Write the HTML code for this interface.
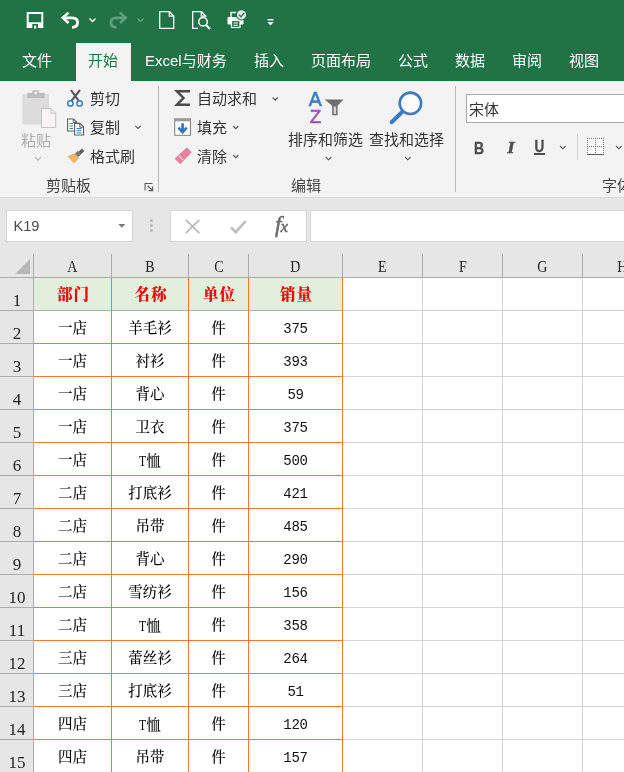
<!DOCTYPE html>
<html lang="zh-CN">
<head>
<meta charset="utf-8">
<title>Excel</title>
<style>
html,body{margin:0;padding:0;}
body{width:624px;height:772px;overflow:hidden;position:relative;background:#fff;will-change:transform;
  font-family:"Liberation Sans","Noto Sans CJK SC",sans-serif;color:#262626;}
.abs{position:absolute;}
#top{left:0;top:0;width:624px;height:81px;background:#217346;}
.tab{position:absolute;top:43px;height:37px;line-height:35px;font-size:15px;color:#fff;white-space:nowrap;}
#tab-active{left:76px;top:43px;width:55px;height:38px;background:#f3f3f3;}
#ribbon{left:0;top:81px;width:624px;height:116px;background:#f3f3f3;}
#fbar{left:0;top:197px;width:624px;height:57px;background:#e6e6e6;border-top:1px solid #dadada;box-sizing:border-box;}
.rt{position:absolute;font-size:15px;line-height:20px;white-space:nowrap;color:#333;}
.gl{position:absolute;font-size:15px;line-height:20px;white-space:nowrap;color:#444;}
.vsep{position:absolute;width:1px;background:#b9b9b9;}
.box{position:absolute;background:#fff;border:1px solid #d4d4d4;box-sizing:border-box;}
/* grid */
#grid{left:0;top:254px;width:624px;height:518px;background:#fff;}
.ch{position:absolute;top:254px;height:24px;background:#e6e6e6;border-right:1px solid #ababab;border-bottom:1px solid #ababab;box-sizing:border-box;
  font-family:"Liberation Serif","Noto Serif CJK SC",serif;font-size:17px;line-height:28px;text-align:center;color:#222;}
.ch span{display:inline-block;transform:scaleX(.8);font-size:17.5px;position:relative;top:-2.5px;}
.rh span{display:inline-block;font-size:17px;padding-left:1px;}
.rh{position:absolute;left:0;width:34px;height:33px;background:#e6e6e6;border-right:1px solid #ababab;border-bottom:1px solid #ababab;box-sizing:border-box;
  font-family:"Liberation Serif","Noto Serif CJK SC",serif;font-size:17px;line-height:45px;text-align:center;color:#222;}
.c{position:absolute;height:33px;line-height:36px;text-align:center;font-size:14.5px;color:#000;font-weight:500;
  font-family:"Liberation Mono","Noto Serif CJK SC",serif;white-space:nowrap;}
.c i{font-style:normal;font-weight:400;display:inline-block;font-family:"Liberation Serif",serif;transform:scaleX(.8);margin:0 -1px;}
.hd{color:#f00000;font-weight:900;font-family:"Liberation Serif","Noto Serif CJK SC",serif;font-size:15.5px;letter-spacing:1px;text-indent:2px;line-height:34px;}
.num{color:#111;font-size:14px;font-weight:400;letter-spacing:-0.3px;}
.gv{position:absolute;width:1px;background:#d4d4d4;}
.gh{position:absolute;height:1px;background:#d4d4d4;}
.ov{position:absolute;width:1px;background:#ed7d31;}
.oh{position:absolute;height:1px;background:#ed7d31;}
</style>
</head>
<body>
<div id="top" class="abs"></div>
<div id="tab-active" class="abs"></div>
<div class="tab" style="left:22px;">文件</div>
<div class="tab" style="left:88px;color:#217346;">开始</div>
<div class="tab" style="left:145px;">Excel与财务</div>
<div class="tab" style="left:254px;">插入</div>
<div class="tab" style="left:311px;">页面布局</div>
<div class="tab" style="left:398px;">公式</div>
<div class="tab" style="left:455px;">数据</div>
<div class="tab" style="left:512px;">审阅</div>
<div class="tab" style="left:569px;">视图</div>

<div id="ribbon" class="abs"></div>
<div id="fbar" class="abs"></div>
<div id="grid" class="abs"></div>
<svg class="abs" style="left:0;top:0" width="300" height="42" viewBox="0 0 300 42">
<!-- save -->
<rect x="27.7" y="13" width="14.6" height="14" fill="none" stroke="#fff" stroke-width="2"/>
<rect x="28" y="22.3" width="14" height="5" fill="#fff"/>
<rect x="32.3" y="24" width="5.7" height="4.5" fill="#217346"/>
<rect x="34.2" y="25.6" width="2" height="3" fill="#fff"/>
<!-- undo -->
<g fill="none" stroke="#fff" stroke-width="2.8" stroke-linejoin="miter">
<path d="M68.5 12.6 L62.8 17.8 L68.5 23" stroke-width="2.6"/>
<path d="M63.5 17.8 H72 Q77.6 17.8 77.6 22.6 Q77.6 27.4 72 27.4" />
</g>
<path d="M89.5 18.5 L92.5 21.5 L95.5 18.5" fill="none" stroke="#fff" stroke-width="1.4"/>
<!-- redo faded -->
<g fill="none" stroke="#5f9f7c" stroke-width="2.8">
<path d="M120 12.6 L125.7 17.8 L120 23" stroke-width="2.6"/>
<path d="M125 17.8 H116.5 Q110.9 17.8 110.9 22.6 Q110.9 27.4 116.5 27.4"/>
</g>
<path d="M137.5 18.5 L140.5 21.5 L143.5 18.5" fill="none" stroke="#5f9f7c" stroke-width="1.4"/>
<!-- new doc -->
<path d="M159.7 11.7 H169.5 L173.7 16 V28.3 H159.7 Z M169.3 11.9 V16.2 H173.5" fill="none" stroke="#fff" stroke-width="1.3"/>
<!-- print preview -->
<path d="M198 28.3 H192.7 V11.7 H201.5 L205.7 16 V17 M201.3 11.9 V16.2 H205.5" fill="none" stroke="#fff" stroke-width="1.3"/>
<circle cx="203" cy="21.8" r="4.3" fill="none" stroke="#fff" stroke-width="1.5"/>
<path d="M206 25 L210 29" stroke="#fff" stroke-width="2" />
<!-- quick print -->
<rect x="227.5" y="17" width="16" height="7.5" rx="1" fill="#fff"/>
<path d="M231 17 V12.5 H236" fill="none" stroke="#fff" stroke-width="1.4"/>
<rect x="231.5" y="20.5" width="8.5" height="7" fill="#217346" stroke="#fff" stroke-width="1.2"/>
<path d="M233.5 23 H238 M233.5 25.3 H238" stroke="#fff" stroke-width="1"/>
<circle cx="241.5" cy="14.8" r="5.6" fill="#217346"/>
<circle cx="241.5" cy="14.8" r="4.6" fill="#e8e8e8"/>
<path d="M239 14.8 L241 16.8 L244.3 12.8" fill="none" stroke="#217346" stroke-width="1.3"/>
<!-- customize -->
<rect x="267.5" y="19" width="6" height="1.4" fill="#fff"/>
<polygon points="267.3,22 273.7,22 270.5,25.5" fill="#fff"/>
</svg>

<div class="rt" style="left:90px;top:89px;">剪切</div>
<div class="rt" style="left:90px;top:118px;">复制</div>
<div class="rt" style="left:90px;top:147px;">格式刷</div>
<div class="rt" style="left:21px;top:131px;color:#adadad;">粘贴</div>
<div class="gl" style="left:46px;top:176px;">剪贴板</div>
<div class="vsep" style="left:158px;top:86px;height:106px;"></div>
<div class="rt" style="left:197px;top:89px;">自动求和</div>
<div class="rt" style="left:197px;top:118px;">填充</div>
<div class="rt" style="left:197px;top:147px;">清除</div>
<div class="gl" style="left:291px;top:176px;">编辑</div>
<div class="rt" style="left:288px;top:130px;">排序和筛选</div>
<div class="rt" style="left:369px;top:130px;">查找和选择</div>
<div class="vsep" style="left:455px;top:86px;height:106px;"></div>
<div class="box" style="left:466px;top:94px;width:170px;height:29px;border-color:#ababab;"></div>
<div class="rt" style="left:469px;top:100px;">宋体</div>
<div class="gl" style="left:602px;top:176px;">字体</div>
<svg class="abs" style="left:0;top:80px" width="170" height="117" viewBox="0 80 170 117">
<!-- paste (disabled) -->
<rect x="22.3" y="94.3" width="26.7" height="30.3" rx="1" fill="#dcdcdc"/>
<rect x="27.3" y="92.8" width="17.3" height="5.2" fill="#bdbdbd"/>
<rect x="32.4" y="90.3" width="6.6" height="4" rx="1" fill="#bdbdbd"/>
<rect x="34.4" y="91.8" width="2.6" height="2.4" fill="#f3f3f3"/>
<path d="M41.5 108.5 H51 L55.7 113.2 V127.5 H41.5 Z" fill="#f8f3f5" stroke="#c3c3c3" stroke-width="1"/>
<path d="M51 108.5 V113.2 H55.7" fill="none" stroke="#c3c3c3" stroke-width="1"/>
<path d="M35 157.2 L38 160.2 L41 157.2" fill="none" stroke="#b5b5b5" stroke-width="1.1"/>
<!-- scissors -->
<path d="M71 90 L78.8 101.2 M80 90 L71.2 101.2" stroke="#595959" stroke-width="2.1" fill="none"/>
<circle cx="70.4" cy="103.4" r="2.7" fill="none" stroke="#3a7bbf" stroke-width="1.5"/>
<circle cx="79.6" cy="103.4" r="2.7" fill="none" stroke="#3a7bbf" stroke-width="1.5"/>
<!-- copy -->
<path d="M76.8 131 H67.6 V119 H73.5 L76.8 122.3 Z" fill="#fff" stroke="#5e5e5e" stroke-width="1.1"/>
<path d="M73.3 119.2 V122.5 H76.6" fill="none" stroke="#5e5e5e" stroke-width="1"/>
<path d="M69.5 123.5 H73 M69.5 126 H73 M69.5 128.5 H73" stroke="#3a7bbf" stroke-width="1"/>
<path d="M74.6 123.4 H80 L83.6 127 V135 H74.6 Z" fill="#fff" stroke="#5e5e5e" stroke-width="1.1"/>
<path d="M79.8 123.6 V127.2 H83.4" fill="none" stroke="#5e5e5e" stroke-width="1"/>
<path d="M76.5 128.5 H81.7 M76.5 130.7 H81.7 M76.5 132.9 H81.7" stroke="#3a7bbf" stroke-width="1"/>
<!-- format painter -->
<path d="M83.2 149.8 L78 154.8" stroke="#5a5a5a" stroke-width="3.4" fill="none"/>
<path d="M79.5 152.2 L75.5 156.6" stroke="#7a7a7a" stroke-width="4.6" fill="none"/>
<path d="M74.3 153.2 L79.3 158 L73.8 163.2 L67.5 156.3 Z" fill="#e9b566"/>
<!-- dialog launcher -->
<path d="M145 190.5 V183.5 H152.5" fill="none" stroke="#5e5e5e" stroke-width="1.1"/>
<path d="M147.5 185.8 L152.3 190.3 M152.6 186.6 V190.6 H148.6" fill="none" stroke="#5e5e5e" stroke-width="1.2"/>
<!-- chevron after copy -->
<path d="M135.3 125.8 L138 128.5 L140.7 125.8" fill="none" stroke="#555" stroke-width="1.1"/>
</svg>
<svg class="abs" style="left:160px;top:80px" width="300" height="117" viewBox="160 80 300 117">
<!-- sigma -->
<path d="M188.8 92.5 V91.2 H176.8 L183.5 98 L176.8 104.8 H188.8 V103.5" fill="none" stroke="#4d4d4d" stroke-width="2.4" stroke-linejoin="miter"/>
<path d="M272.6 97.5 L275.2 100.1 L277.8 97.5" fill="none" stroke="#555" stroke-width="1.1"/>
<!-- fill -->
<rect x="174.7" y="118.9" width="15.8" height="16.4" fill="#fff" stroke="#7c7c7c" stroke-width="1"/>
<rect x="174.7" y="118.9" width="15.8" height="2.4" fill="#9a9a9a"/>
<path d="M182.6 123.2 V131.5 M178.4 127.6 L182.6 132.2 L186.8 127.6" fill="none" stroke="#2f77bd" stroke-width="2.6"/>
<path d="M233.2 126 L235.8 128.6 L238.4 126" fill="none" stroke="#555" stroke-width="1.1"/>
<!-- eraser -->
<path d="M186.8 148.2 L191 152.2 L180.2 163.4 L175.4 158.6 Z" fill="#e8819b" stroke="#e8819b" stroke-width="1.2" stroke-linejoin="round"/>
<path d="M178.6 155.6 L183.2 160.2" stroke="#f7d5dd" stroke-width="1.2"/>
<path d="M233.2 155 L235.8 157.6 L238.4 155" fill="none" stroke="#555" stroke-width="1.1"/>
<!-- sort & filter -->
<text x="315.3" y="106.4" text-anchor="middle" font-family="Liberation Sans, sans-serif" font-size="19.5" fill="#3b7dc4" stroke="#3b7dc4" stroke-width="0.6">A</text>
<text x="315.5" y="123" text-anchor="middle" font-family="Liberation Sans, sans-serif" font-size="19" fill="#a352b9" stroke="#a352b9" stroke-width="0.6">Z</text>
<path d="M324.7 99.5 H343.5 L337.6 105.8 V115.3 H332.2 V105.8 Z" fill="#6e6e6e"/>
<rect x="333.7" y="106.5" width="2.4" height="7.4" fill="#d6d6d6"/>
<path d="M325.7 157 L328.5 159.8 L331.3 157" fill="none" stroke="#555" stroke-width="1.1"/>
<!-- find -->
<circle cx="410.4" cy="103.3" r="10.7" fill="#fcfcfc" stroke="#3a7bbf" stroke-width="2.6"/>
<path d="M402.4 111.8 L391.6 122.2" stroke="#3a7bbf" stroke-width="4" stroke-linecap="round"/>
<path d="M405 157 L407.8 159.8 L410.6 157" fill="none" stroke="#555" stroke-width="1.1"/>
</svg>
<div class="abs" style="left:472.8px;top:136px;width:12px;text-align:center;font-family:'Liberation Sans',sans-serif;font-weight:bold;font-size:16.5px;line-height:24px;color:#4d4d4d;-webkit-text-stroke:0.35px #4d4d4d;transform:scaleX(.84);">B</div>
<div class="abs" style="left:504.5px;top:135.5px;width:12px;text-align:center;font-family:'Liberation Serif',serif;font-weight:bold;font-style:italic;font-size:16.5px;line-height:24px;color:#4d4d4d;-webkit-text-stroke:0.4px #4d4d4d;transform:scaleX(1.15);">I</div>
<div class="abs" style="left:533px;top:135px;width:13px;text-align:center;font-family:'Liberation Sans',sans-serif;font-size:16px;font-weight:bold;line-height:24px;color:#4d4d4d;-webkit-text-stroke:0.3px #4d4d4d;transform:scaleX(.85);">U</div>
<div class="abs" style="left:534px;top:153.3px;width:11.4px;height:1.7px;background:#4d4d4d;"></div>
<svg class="abs" style="left:555px;top:130px" width="69" height="34" viewBox="555 130 69 34">
<path d="M560 146 L562.8 148.8 L565.6 146" fill="none" stroke="#555" stroke-width="1.1"/>
<rect x="577" y="134" width="1" height="26" fill="#d0d0d0"/>
<rect x="587" y="138" width="17" height="16" fill="#fcfcfc"/>
<g stroke="#727272" stroke-width="1" stroke-dasharray="1 1" fill="none" shape-rendering="crispEdges">
<path d="M587 138.5 H604 M587 146.5 H604 M587.5 138 V154 M595.5 138 V154 M603.5 138 V154"/>
</g>
<rect x="587" y="154" width="17.4" height="1.1" fill="#5a5a5a" shape-rendering="crispEdges"/>
<path d="M616 146 L618.8 148.8 L621.6 146" fill="none" stroke="#555" stroke-width="1.1"/>
</svg>

<div class="box" style="left:6px;top:210px;width:127px;height:32px;"></div>
<div class="abs" style="left:13.5px;top:216px;font-size:14.6px;line-height:20px;color:#4a4a4a;">K19</div>
<svg class="abs" style="left:117px;top:223px" width="10" height="6"><polygon points="1.3,1 8.4,1 4.85,4.8" fill="#777"/></svg>
<svg class="abs" style="left:149px;top:218px" width="5" height="16"><rect x="1" y="1.5" width="2.6" height="2.4" fill="#b3b3b3"/><rect x="1" y="6.4" width="2.6" height="2.4" fill="#b3b3b3"/><rect x="1" y="11.3" width="2.6" height="2.4" fill="#b3b3b3"/></svg>
<div class="box" style="left:170px;top:210px;width:137px;height:32px;"></div>
<svg class="abs" style="left:184px;top:218px" width="18" height="18"><path d="M1.8 1.8 L15.4 15.2 M15.4 1.8 L1.8 15.2" stroke="#b9b9b9" stroke-width="1.7" fill="none"/></svg>
<svg class="abs" style="left:229px;top:218px" width="20" height="18"><path d="M2 9.5 L6.8 14.2 L16.8 3" stroke="#bcbcbc" stroke-width="2.5" fill="none"/></svg>
<div class="abs" style="left:275px;top:212px;font-family:'Liberation Serif',serif;font-style:italic;font-size:23px;line-height:26px;color:#6a6a6a;-webkit-text-stroke:0.5px #6a6a6a;letter-spacing:-1px;">f<span style="font-size:17px;">x</span></div>
<div class="box" style="left:310px;top:210px;width:330px;height:32px;"></div>

<div class="ch" style="left:0;width:34px;"><svg width="34" height="23" style="position:absolute;left:0;top:0"><polygon points="15,20 30,20 30,5" fill="#b7b7b7"/></svg></div>
<div class="ch" style="left:34px;width:78px;"><span>A</span></div>
<div class="ch" style="left:112px;width:77px;"><span>B</span></div>
<div class="ch" style="left:189px;width:60px;"><span>C</span></div>
<div class="ch" style="left:249px;width:94px;"><span>D</span></div>
<div class="ch" style="left:343px;width:80px;"><span>E</span></div>
<div class="ch" style="left:423px;width:80px;"><span>F</span></div>
<div class="ch" style="left:503px;width:80px;"><span>G</span></div>
<div class="ch" style="left:583px;width:80px;"><span>H</span></div>
<div class="abs" style="left:34px;top:278px;width:308px;height:32px;background:#e2efda;"></div>
<div class="rh" style="top:278px;"><span>1</span></div>
<div class="rh" style="top:311px;"><span>2</span></div>
<div class="rh" style="top:344px;"><span>3</span></div>
<div class="rh" style="top:377px;"><span>4</span></div>
<div class="rh" style="top:410px;"><span>5</span></div>
<div class="rh" style="top:443px;"><span>6</span></div>
<div class="rh" style="top:476px;"><span>7</span></div>
<div class="rh" style="top:509px;"><span>8</span></div>
<div class="rh" style="top:542px;"><span>9</span></div>
<div class="rh" style="top:575px;"><span>10</span></div>
<div class="rh" style="top:608px;"><span>11</span></div>
<div class="rh" style="top:641px;"><span>12</span></div>
<div class="rh" style="top:674px;"><span>13</span></div>
<div class="rh" style="top:707px;"><span>14</span></div>
<div class="rh" style="top:740px;"><span>15</span></div>
<div class="gv" style="left:342px;top:278px;height:494px;"></div>
<div class="gv" style="left:422px;top:278px;height:494px;"></div>
<div class="gv" style="left:502px;top:278px;height:494px;"></div>
<div class="gv" style="left:582px;top:278px;height:494px;"></div>
<div class="gh" style="left:343px;top:310px;width:281px;"></div>
<div class="gh" style="left:343px;top:343px;width:281px;"></div>
<div class="gh" style="left:343px;top:376px;width:281px;"></div>
<div class="gh" style="left:343px;top:409px;width:281px;"></div>
<div class="gh" style="left:343px;top:442px;width:281px;"></div>
<div class="gh" style="left:343px;top:475px;width:281px;"></div>
<div class="gh" style="left:343px;top:508px;width:281px;"></div>
<div class="gh" style="left:343px;top:541px;width:281px;"></div>
<div class="gh" style="left:343px;top:574px;width:281px;"></div>
<div class="gh" style="left:343px;top:607px;width:281px;"></div>
<div class="gh" style="left:343px;top:640px;width:281px;"></div>
<div class="gh" style="left:343px;top:673px;width:281px;"></div>
<div class="gh" style="left:343px;top:706px;width:281px;"></div>
<div class="gh" style="left:343px;top:739px;width:281px;"></div>
<div class="gh" style="left:343px;top:772px;width:281px;"></div>
<div class="gh" style="left:34px;top:310px;width:309px;background:#b0b0b0;"></div>
<div class="ov" style="left:111px;top:278px;height:494px;"></div>
<div class="ov" style="left:188px;top:278px;height:494px;"></div>
<div class="ov" style="left:248px;top:278px;height:494px;"></div>
<div class="ov" style="left:342px;top:278px;height:494px;"></div>
<div class="oh" style="left:34px;top:343px;width:309px;"></div>
<div class="oh" style="left:34px;top:376px;width:309px;"></div>
<div class="oh" style="left:34px;top:409px;width:309px;"></div>
<div class="oh" style="left:34px;top:442px;width:309px;"></div>
<div class="oh" style="left:34px;top:475px;width:309px;"></div>
<div class="oh" style="left:34px;top:508px;width:309px;"></div>
<div class="oh" style="left:34px;top:541px;width:309px;"></div>
<div class="oh" style="left:34px;top:574px;width:309px;"></div>
<div class="oh" style="left:34px;top:607px;width:309px;"></div>
<div class="oh" style="left:34px;top:640px;width:309px;"></div>
<div class="oh" style="left:34px;top:673px;width:309px;"></div>
<div class="oh" style="left:34px;top:706px;width:309px;"></div>
<div class="oh" style="left:34px;top:739px;width:309px;"></div>
<div class="oh" style="left:34px;top:772px;width:309px;"></div>
<div class="c hd" style="left:34px;top:278px;width:77px;">部门</div>
<div class="c hd" style="left:112px;top:278px;width:76px;">名称</div>
<div class="c hd" style="left:189px;top:278px;width:59px;">单位</div>
<div class="c hd" style="left:249px;top:278px;width:93px;">销量</div>
<div class="c" style="left:34px;top:311px;width:77px;">一店</div>
<div class="c" style="left:112px;top:311px;width:76px;">羊毛衫</div>
<div class="c" style="left:189px;top:311px;width:59px;">件</div>
<div class="c num" style="left:249px;top:311px;width:93px;">375</div>
<div class="c" style="left:34px;top:344px;width:77px;">一店</div>
<div class="c" style="left:112px;top:344px;width:76px;">衬衫</div>
<div class="c" style="left:189px;top:344px;width:59px;">件</div>
<div class="c num" style="left:249px;top:344px;width:93px;">393</div>
<div class="c" style="left:34px;top:377px;width:77px;">一店</div>
<div class="c" style="left:112px;top:377px;width:76px;">背心</div>
<div class="c" style="left:189px;top:377px;width:59px;">件</div>
<div class="c num" style="left:249px;top:377px;width:93px;">59</div>
<div class="c" style="left:34px;top:410px;width:77px;">一店</div>
<div class="c" style="left:112px;top:410px;width:76px;">卫衣</div>
<div class="c" style="left:189px;top:410px;width:59px;">件</div>
<div class="c num" style="left:249px;top:410px;width:93px;">375</div>
<div class="c" style="left:34px;top:443px;width:77px;">一店</div>
<div class="c" style="left:112px;top:443px;width:76px;"><i>T</i>恤</div>
<div class="c" style="left:189px;top:443px;width:59px;">件</div>
<div class="c num" style="left:249px;top:443px;width:93px;">500</div>
<div class="c" style="left:34px;top:476px;width:77px;">二店</div>
<div class="c" style="left:112px;top:476px;width:76px;">打底衫</div>
<div class="c" style="left:189px;top:476px;width:59px;">件</div>
<div class="c num" style="left:249px;top:476px;width:93px;">421</div>
<div class="c" style="left:34px;top:509px;width:77px;">二店</div>
<div class="c" style="left:112px;top:509px;width:76px;">吊带</div>
<div class="c" style="left:189px;top:509px;width:59px;">件</div>
<div class="c num" style="left:249px;top:509px;width:93px;">485</div>
<div class="c" style="left:34px;top:542px;width:77px;">二店</div>
<div class="c" style="left:112px;top:542px;width:76px;">背心</div>
<div class="c" style="left:189px;top:542px;width:59px;">件</div>
<div class="c num" style="left:249px;top:542px;width:93px;">290</div>
<div class="c" style="left:34px;top:575px;width:77px;">二店</div>
<div class="c" style="left:112px;top:575px;width:76px;">雪纺衫</div>
<div class="c" style="left:189px;top:575px;width:59px;">件</div>
<div class="c num" style="left:249px;top:575px;width:93px;">156</div>
<div class="c" style="left:34px;top:608px;width:77px;">二店</div>
<div class="c" style="left:112px;top:608px;width:76px;"><i>T</i>恤</div>
<div class="c" style="left:189px;top:608px;width:59px;">件</div>
<div class="c num" style="left:249px;top:608px;width:93px;">358</div>
<div class="c" style="left:34px;top:641px;width:77px;">三店</div>
<div class="c" style="left:112px;top:641px;width:76px;">蕾丝衫</div>
<div class="c" style="left:189px;top:641px;width:59px;">件</div>
<div class="c num" style="left:249px;top:641px;width:93px;">264</div>
<div class="c" style="left:34px;top:674px;width:77px;">三店</div>
<div class="c" style="left:112px;top:674px;width:76px;">打底衫</div>
<div class="c" style="left:189px;top:674px;width:59px;">件</div>
<div class="c num" style="left:249px;top:674px;width:93px;">51</div>
<div class="c" style="left:34px;top:707px;width:77px;">四店</div>
<div class="c" style="left:112px;top:707px;width:76px;"><i>T</i>恤</div>
<div class="c" style="left:189px;top:707px;width:59px;">件</div>
<div class="c num" style="left:249px;top:707px;width:93px;">120</div>
<div class="c" style="left:34px;top:740px;width:77px;">四店</div>
<div class="c" style="left:112px;top:740px;width:76px;">吊带</div>
<div class="c" style="left:189px;top:740px;width:59px;">件</div>
<div class="c num" style="left:249px;top:740px;width:93px;">157</div>
</body>
</html>
